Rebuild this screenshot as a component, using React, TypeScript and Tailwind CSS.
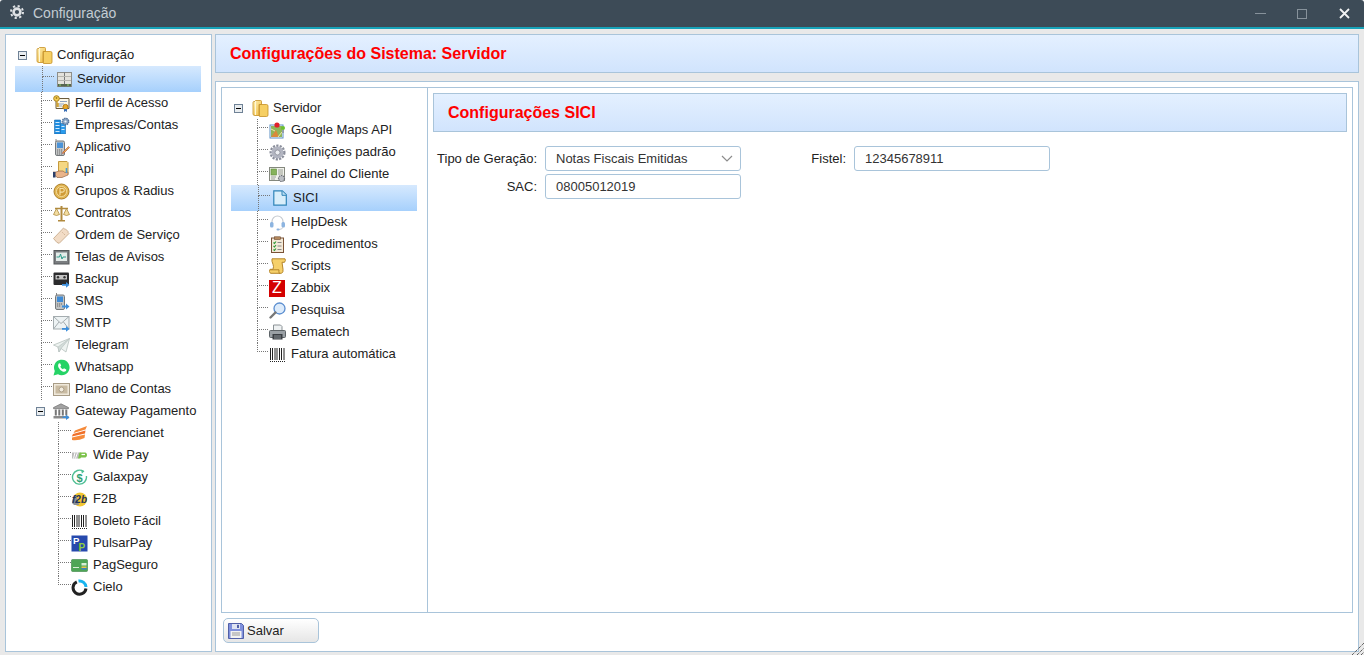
import type { ReactNode } from "react";

const svg = "block w-[17px] h-[17px] shrink-0";

// Inline icons, drawn on a 17×17 grid to match the legacy tree icons
const Icons: Record<string, ReactNode> = {
  folder: (
    <svg className={svg} viewBox="0 0 17 17">
      <defs>
        <linearGradient id="fold" x1="0" y1="0" x2="1" y2="1">
          <stop offset="0" stopColor="#fff2b8" />
          <stop offset="1" stopColor="#efb93c" />
        </linearGradient>
      </defs>
      <path d="M1 2.500 q0-1 1-1 h1.500 v-1 h5 q1 0 1 1 v3 h-2.500 v11 h-4 q-2 0-2-1.500z" fill="url(#fold)" stroke="#c58f25" strokeWidth="0.8" />
      <path d="M7.500 4.500 h7 q1.500 0 1.500 1.500 v9 q0 1.500-1.500 1.500 h-7z" fill="#f6cf63" stroke="#c58f25" strokeWidth="0.8" />
      <path d="M3.500 1 v14" stroke="#fff8d8" strokeWidth="1" />
    </svg>
  ),
  server: (
    <svg className={svg} viewBox="0 0 17 17">
      <rect x="1.500" y="1.500" width="14" height="14" fill="#e3e2dc" stroke="#8d8e8a" />
      <path d="M8.500 1.500 v14" stroke="#77797a" />
      <path d="M2 5.500 h13 M2 9.500 h13" stroke="#b5b5ae" />
      <rect x="2" y="13" width="13" height="2.500" fill="#55664f" />
      <path d="M3 14 h2 M11 14 h2" stroke="#8fd06a" />
    </svg>
  ),
  perfil: (
    <svg className={svg} viewBox="0 0 17 17">
      <path d="M3 3.500 h13 v10 h-13z" fill="#fdf8e8" stroke="#6c5c3e" />
      <path d="M7 6.500 h7 M6 9 h5 M6 11 h3" stroke="#8fa3c0" />
      <circle cx="3.500" cy="3.500" r="2.800" fill="#f5cf55" stroke="#a8801e" />
      <circle cx="3.500" cy="3" r="0.900" fill="#a8801e" />
      <path d="M4 6 v6 M4 9 h2 M4 11 h2" stroke="#c99a2a" strokeWidth="1.300" />
      <circle cx="12.500" cy="12" r="2.600" fill="#e8a92c" stroke="#b37a14" />
      <path d="M11 14 v3 l1.500-1 1.500 1 v-3" fill="#3b6fb6" />
    </svg>
  ),
  empresas: (
    <svg className={svg} viewBox="0 0 17 17">
      <path d="M1.500 3 h6 v14 h-6z" fill="#1f8de0" stroke="#1566ad" strokeWidth="0.600" />
      <path d="M7.500 6.500 h5 v10.500 h-5z" fill="#2a9bec" stroke="#1566ad" strokeWidth="0.600" />
      <path d="M2.500 5.500 h4 M2.500 8.500 h4 M2.500 11.500 h4 M2.500 14.500 h4 M8.500 9.500 h3 M8.500 12.500 h3" stroke="#cfeaff" strokeWidth="1.200" />
      <circle cx="12.500" cy="4.500" r="3.200" fill="#8aa5c4" stroke="#56749c" strokeDasharray="1.500 .7" strokeWidth="1.400" />
      <circle cx="12.500" cy="4.500" r="1.100" fill="#f2f6fb" />
    </svg>
  ),
  aplicativo: (
    <svg className={svg} viewBox="0 0 17 17">
      <path d="M3 0 v3" stroke="#888" />
      <rect x="2.500" y="2" width="9" height="14.500" rx="1.500" fill="#c6c8c9" stroke="#74797c" />
      <rect x="4" y="3.500" width="6" height="5.500" fill="#4b93d8" />
      <path d="M4 11 h6 M4 13 h6 M4 15 h6" stroke="#666" strokeDasharray="1.200 .8" />
      <path d="M10 13 l5.500-5.500 1 1-5.500 5.500-1.500.5z" fill="#e6b34a" stroke="#b3443a" strokeWidth="0.600" />
    </svg>
  ),
  api: (
    <svg className={svg} viewBox="0 0 17 17">
      <path d="M5.500 .5 h8.500 l1 1 v12 h-9.500z" fill="#f5d782" stroke="#c59a3c" />
      <path d="M0 11 h3 l3-1 h4 l2 1.500 3-.5 v3 l-6 2.500 h-5 l-1-1.500 h-3z" fill="#e9b48a" stroke="#8a5a3a" strokeWidth="0.600" />
      <path d="M0 11 h2.500 v5.500 h-2.500z" fill="#2a3f6b" />
      <path d="M13.500 7 v5" stroke="#4c9ad6" strokeWidth="1.600" />
    </svg>
  ),
  grupos: (
    <svg className={svg} viewBox="0 0 17 17">
      <circle cx="8.500" cy="8.500" r="7.500" fill="#e2b654" stroke="#ad8028" />
      <circle cx="8.500" cy="8.500" r="5" fill="#d09b36" stroke="#f3dd9c" />
      <path d="M7 12 V5.500 h2.500 a1.800 1.800 0 0 1 0 3.600 H7" fill="none" stroke="#f6e2a8" strokeWidth="1.100" />
    </svg>
  ),
  contratos: (
    <svg className={svg} viewBox="0 0 17 17">
      <path d="M8.500 1 v14" stroke="#b18a3e" strokeWidth="2" />
      <path d="M5 15.800 h7 M2 3.500 h13" stroke="#b18a3e" strokeWidth="1.500" />
      <path d="M3.500 3.500 l-3 6 q3 2 6 0z M13.500 3.500 l-3 6 q3 2 6 0z" fill="#f2dca0" stroke="#a5802f" strokeWidth="0.700" />
    </svg>
  ),
  ordem: (
    <svg className={svg} viewBox="0 0 17 17">
      <path d="M.5 11.500 L10.500 1 q.8 1.200 2 1 l2.500 2.500 q-.2 1.300 1 2 L6 16.500 q-.6-1-2-1z" fill="#f2dcc6" stroke="#cdb294" />
      <path d="M9.500 5.500 l2.500 2.500" stroke="#c09f7c" strokeDasharray="1 1" />
    </svg>
  ),
  telas: (
    <svg className={svg} viewBox="0 0 17 17">
      <rect x="1" y="1.500" width="15" height="13.500" fill="#7a7d80" stroke="#55585a" />
      <rect x="3" y="3.500" width="11" height="8.500" fill="#e4ebe9" />
      <path d="M3.500 8 h3 l1-3 1.500 5 1-2 h3" fill="none" stroke="#2f9a8a" />
    </svg>
  ),
  backup: (
    <svg className={svg} viewBox="0 0 17 17">
      <rect x="0.500" y="1.500" width="15.500" height="12.500" rx="1" fill="#2b2b2d" />
      <rect x="2.500" y="4" width="11.500" height="4.500" fill="#c4c4c4" />
      <circle cx="5" cy="6.300" r="1.200" fill="#333" />
      <circle cx="11.500" cy="6.300" r="1.200" fill="#333" />
      <path d="M9 13 h4 v-2 l3.500 3-3.500 2.800 v-2 h-4z" fill="#3d8fdc" />
    </svg>
  ),
  sms: (
    <svg className={svg} viewBox="0 0 17 17">
      <path d="M3.500 0 v3" stroke="#888" />
      <rect x="2.500" y="2" width="9" height="14.500" rx="1.500" fill="#c0c3c4" stroke="#74797c" />
      <rect x="4" y="3.500" width="6" height="5.500" fill="#3f8bd6" />
      <path d="M4 11 h5 M4 13 h4" stroke="#666" strokeDasharray="1.200 .8" />
      <path d="M9 12.500 h4 v-2 l3.500 3-3.500 3 v-2 h-4z" fill="#3d8fdc" />
    </svg>
  ),
  smtp: (
    <svg className={svg} viewBox="0 0 17 17">
      <rect x="0.500" y="1.500" width="15.500" height="12.500" fill="#eef3f4" stroke="#a5adb0" />
      <path d="M.5 1.500 L8 8.500 16 1.500 M.5 14 L6 7 M16 14 L10.500 7" fill="none" stroke="#a5adb0" />
      <path d="M9 13 h4 v-2 l3.500 3-3.500 2.800 v-2 h-4z" fill="#3d8fdc" />
    </svg>
  ),
  telegram: (
    <svg className={svg} viewBox="0 0 17 17">
      <path d="M.5 8 L16.500 1.500 13 15 8 11.500 6 15 5 10z" fill="#eef3f1" stroke="#b5c0bd" strokeWidth="0.800" />
      <path d="M5 10 L16.500 1.500 8 11.500 6 15z" fill="#d3dcd9" stroke="#b5c0bd" strokeWidth="0.600" />
    </svg>
  ),
  whatsapp: (
    <svg className={svg} viewBox="0 0 17 17">
      <path d="M.5 16.500 l1.300-4.500 A7.800 7.800 0 1 1 5 15.300z" fill="#25d366" />
      <path d="M5.800 4.400 l1.300-.2 1.100 2.400-.9 1.100 a5.200 5.200 0 0 0 2.600 2.600 l1.100-1 2.300 1.100-.2 1.300 c-.7 1.100-2.200 1.300-3.500.8 a8 8 0 0 1-4.200-4.200 c-.5-1.300-.3-3 .4-3.900z" fill="#fff" />
    </svg>
  ),
  plano: (
    <svg className={svg} viewBox="0 0 17 17">
      <rect x="0.500" y="2.500" width="16" height="12" fill="#efe8da" stroke="#a89c86" />
      <rect x="2.500" y="4.500" width="12" height="8" fill="#c9bba2" />
      <circle cx="8.500" cy="8.500" r="2.400" fill="#f2ecdf" stroke="#8f8068" strokeWidth="0.600" />
    </svg>
  ),
  gateway: (
    <svg className={svg} viewBox="0 0 17 17">
      <path d="M8 .8 L15.500 4.500 v1.200 h-15 v-1.200z" fill="#a2a2a2" stroke="#666" strokeWidth="0.600" />
      <path d="M2.800 6.500 v6 M6.300 6.500 v6 M9.800 6.500 v6 M13.300 6.500 v6" stroke="#777" strokeWidth="2" />
      <path d="M.5 13 h15 v2.500 h-15z" fill="#8a8a8a" />
      <path d="M9.500 13.500 h3.500 v-2 l3.500 3-3.500 2.500 v-2 h-3.500z" fill="#3d8fdc" />
    </svg>
  ),
  gerencianet: (
    <svg className={svg} viewBox="0 0 17 17">
      <path d="M16 1 L4 5.500 2.500 8 14.500 4.500z" fill="#f58a3a" />
      <path d="M14.500 5.500 L2 9 .8 11.500 14 8.500z" fill="#f0702a" />
      <path d="M14 9.500 L1 12.500 1 15 q6 1 12.500-2z" fill="#f58a3a" />
    </svg>
  ),
  widepay: (
    <svg className={svg} viewBox="0 0 17 17">
      <path d="M1 5.500 h9 l-2.500 6 h-6.500z" fill="#bdbdbd" />
      <path d="M4 5.500 l-1.500 6 M6.500 5.500 l-2 6" stroke="#fff" />
      <path d="M8.500 5.500 h6 a2.800 2.800 0 0 1 0 5 h-4.500 l-.8 1 h-2.200z" fill="#7cc24a" />
      <path d="M10.500 7.500 h3.500" stroke="#fff" strokeWidth="1.200" />
    </svg>
  ),
  galaxpay: (
    <svg className={svg} viewBox="0 0 17 17">
      <path d="M12.500 2.400 A7 7 0 1 0 15.400 7" fill="none" stroke="#4fbf93" strokeWidth="1.400" />
      <path d="M10 .8 l3.500 1.400-2.600 2.400z" fill="#4fbf93" />
      <text x="8.500" y="12.500" textAnchor="middle" fontFamily="'Liberation Sans', sans-serif" fontSize="11" fontWeight="700" fill="#2f9f73">$</text>
    </svg>
  ),
  f2b: (
    <svg className={svg} viewBox="0 0 17 17">
      <circle cx="9" cy="8.500" r="7" fill="#f2c631" />
      <path d="M1 12 q0-5 4-8 l3 10 h-5z" fill="#8a8f96" />
      <text x="8.500" y="12" textAnchor="middle" fontFamily="'Liberation Sans', sans-serif" fontSize="10" fontStyle="italic" fontWeight="700" fill="#23345c">f2b</text>
    </svg>
  ),
  barcode: (
    <svg className={svg} viewBox="0 0 17 17">
      <path d="M1.500 2 v12 M3.500 2 v12 M6 2 v12 M8 2 v12 M10.500 2 v12 M12.500 2 v12 M15 2 v12" stroke="#222" strokeWidth="1" />
      <path d="M1 15.500 h15" stroke="#222" strokeDasharray="1 1" />
    </svg>
  ),
  pulsar: (
    <svg className={svg} viewBox="0 0 17 17">
      <rect x="0.500" y="0.500" width="16" height="16" fill="#2649ad" />
      <text x="2" y="9" fontFamily="'Liberation Sans', sans-serif" fontSize="9.500" fontWeight="700" fill="#fff">P</text>
      <text x="7.500" y="15.500" fontFamily="'Liberation Sans', sans-serif" fontSize="10" fontWeight="700" fill="#8fd03e">P</text>
    </svg>
  ),
  pagseguro: (
    <svg className={svg} viewBox="0 0 17 17">
      <rect x="0.500" y="2.500" width="16" height="12" rx="1" fill="#4ea556" stroke="#3b8543" strokeWidth="0.600" />
      <path d="M2 10.500 h6" stroke="#d8eed6" />
      <rect x="10.500" y="6" width="5" height="2.500" fill="#d8eed6" />
      <rect x="10.500" y="9.500" width="5" height="1.500" fill="#e8c64a" />
      <rect x="10.500" y="11" width="5" height="1.500" fill="#3e7fc5" />
    </svg>
  ),
  cielo: (
    <svg className={svg} viewBox="0 0 17 17">
      <path d="M7.500 2 A6.500 6.500 0 0 1 15 8" fill="none" stroke="#19b4ee" strokeWidth="3" />
      <path d="M15 9.500 A6.500 6.500 0 1 1 5.800 2.800" fill="none" stroke="#222" strokeWidth="3" />
    </svg>
  ),
  maps: (
    <svg className={svg} viewBox="0 0 17 17">
      <rect x="1" y="3" width="13" height="13" fill="#fff" stroke="#5d8fc4" />
      <path d="M2 4 h11 v11 h-11z" fill="#8fb65a" />
      <path d="M2 15 l5-7 3 7z" fill="#d98a3a" />
      <path d="M2 7 l4 2 M9 15 l4-5" stroke="#f3e6a8" />
      <circle cx="8" cy="3" r="2.600" fill="#e0202a" />
      <circle cx="14" cy="6" r="2" fill="#6cc02e" />
      <path d="M14 8 v3" stroke="#777" />
    </svg>
  ),
  gear: (
    <svg className={svg} viewBox="0 0 17 17">
      <circle cx="8.500" cy="8.500" r="6.800" fill="none" stroke="#8a8e9b" strokeWidth="2.400" strokeDasharray="2.200 1.200" />
      <circle cx="8.500" cy="8.500" r="6" fill="#b2b5c1" />
      <circle cx="8.500" cy="8.500" r="2.500" fill="#eceef2" stroke="#82858f" strokeWidth="0.700" />
    </svg>
  ),
  painel: (
    <svg className={svg} viewBox="0 0 17 17">
      <rect x="0.500" y="1.500" width="15" height="13" fill="#f1f2ec" stroke="#84887e" />
      <rect x="2" y="3" width="5.500" height="6" fill="#86b35a" stroke="#5e8a3a" strokeWidth="0.600" />
      <path d="M9 4 h5 M9 6 h5 M9 8 h5 M2 11 h5 M2 13 h4" stroke="#9a9e94" />
      <circle cx="12.500" cy="12.500" r="3" fill="#bcbfc4" stroke="#6e7178" strokeWidth="1.200" strokeDasharray="1.500 .7" />
    </svg>
  ),
  sici: (
    <svg className="block w-[14px] h-[16px] shrink-0" viewBox="0 0 14 16">
      <path d="M.800 .800 h8.500 l4 4 v10.400 h-12.500z" fill="#d9eefa" stroke="#2f84b8" strokeWidth="1.200" />
      <path d="M9 1 v4.300 h4.300" fill="#bfe0f3" stroke="#2f84b8" />
    </svg>
  ),
  helpdesk: (
    <svg className={svg} viewBox="0 0 17 17">
      <path d="M3 9 V7.500 a5.500 5.500 0 0 1 11 0 V9" fill="none" stroke="#c5cad0" strokeWidth="1.200" />
      <rect x="1" y="8" width="3.500" height="5.500" rx="1.500" fill="#8cb4e0" />
      <rect x="12.500" y="8" width="3.500" height="5.500" rx="1.500" fill="#8cb4e0" />
      <path d="M14 13 q-.500 2.500-4 2.500" fill="none" stroke="#c5cad0" />
      <rect x="7.500" y="14.500" width="3" height="2" rx="1" fill="#8cb4e0" />
    </svg>
  ),
  procedimentos: (
    <svg className={svg} viewBox="0 0 17 17">
      <rect x="2.500" y="2" width="12" height="14.500" fill="#f3e9d8" stroke="#7a5236" />
      <rect x="5.500" y="0.800" width="6" height="2.700" fill="#b58a5f" stroke="#6e4a30" strokeWidth="0.600" />
      <path d="M4.500 6.500 l1 1 1.500-2 M4.500 10 l1 1 1.500-2 M4.500 13.500 l1 1 1.500-2" fill="none" stroke="#2f9a35" strokeWidth="1.100" />
      <path d="M8.500 6.500 h4 M8.500 10 h4 M8.500 13.500 h4" stroke="#888" />
    </svg>
  ),
  scripts: (
    <svg className={svg} viewBox="0 0 17 17">
      <path d="M3 .8 h13 q1 1.500-.5 3.500 h-2.500 l1 7 q.5 3-1.500 4 h-11 q-2-1.500-.5-4 h3 q1-3 0-5 q-1.500-3-1-5.500z" fill="#f6d06a" stroke="#b5852a" />
      <path d="M1.500 11.800 h8.500 q-.5 2 .5 4" fill="none" stroke="#b5852a" />
    </svg>
  ),
  zabbix: (
    <div className="w-[16px] h-[17px] bg-[#d40000] shrink-0 flex items-center justify-center text-white text-[16px] leading-none">Z</div>
  ),
  pesquisa: (
    <svg className={svg} viewBox="0 0 17 17">
      <circle cx="10.500" cy="6.500" r="5.500" fill="#dcebfb" stroke="#5b8ed0" strokeWidth="1.300" />
      <path d="M6.500 10.500 L1.500 15.500" stroke="#777" strokeWidth="2.400" strokeLinecap="round" />
    </svg>
  ),
  bematech: (
    <svg className={svg} viewBox="0 0 17 17">
      <path d="M4.500 1 h7 l1.500 1.500 v4.500 h-8.500z" fill="#eef1f2" stroke="#8a9195" />
      <rect x="0.500" y="6.500" width="16" height="7" rx="1" fill="#9aa0a5" stroke="#5d6367" />
      <rect x="3.500" y="10" width="10" height="5.500" fill="#3a3f44" />
      <path d="M5 12 h7 M5 14 h7" stroke="#8a9195" />
    </svg>
  ),
};

interface Item {
  icon: string;
  label: string;
  selected?: boolean;
}

// Dotted elbow that joins a row to its parent
function Guide({ last, className, top }: { last?: boolean; className: string; top: string }) {
  return (
    <span className={`flex flex-col self-stretch shrink-0 ${className}`}>
      <span className={`border-l border-b border-dotted border-[#777] ${top}`} />
      <span className={`flex-1 border-l border-dotted ${last ? "border-transparent" : "border-[#777]"}`} />
    </span>
  );
}

function Minus() {
  return (
    <span className="w-[9px] h-[9px] shrink-0 border border-[#6f8296] bg-[#e9edf0] flex items-center justify-center">
      <span className="w-[5px] h-px bg-black" />
    </span>
  );
}

function Row({ item, last }: { item: Item; last?: boolean }) {
  if (item.selected) {
    return (
      <div className="flex items-center h-[26px] pl-[27px] bg-gradient-to-b from-[#d6e9fe] to-[#a6d0fc] text-[#1a1a1a]">
        <Guide className="w-[12px]" top="h-[11px]" />
        <span className="w-[18px] flex justify-center shrink-0 pl-[2px]">{Icons[item.icon]}</span>
        <span className="ml-[5px]">{item.label}</span>
      </div>
    );
  }
  return (
    <div className="flex items-center h-[22px] pl-[26px]">
      <Guide className="w-[11px]" top="h-[9px]" last={last} />
      <span className="w-[18px] shrink-0 pl-px">{Icons[item.icon]}</span>
      <span className="ml-[5px]">{item.label}</span>
    </div>
  );
}

function ParentRow({ icon, label, className, slot }: { icon: string; label: string; className: string; slot: string }) {
  return (
    <div className={`flex items-center h-[22px] ${className}`}>
      <Minus />
      <span className={`shrink-0 ${slot}`}>{Icons[icon]}</span>
      <span>{label}</span>
    </div>
  );
}

const MAIN_TREE: Item[] = [
  { icon: "server", label: "Servidor", selected: true },
  { icon: "perfil", label: "Perfil de Acesso" },
  { icon: "empresas", label: "Empresas/Contas" },
  { icon: "aplicativo", label: "Aplicativo" },
  { icon: "api", label: "Api" },
  { icon: "grupos", label: "Grupos & Radius" },
  { icon: "contratos", label: "Contratos" },
  { icon: "ordem", label: "Ordem de Serviço" },
  { icon: "telas", label: "Telas de Avisos" },
  { icon: "backup", label: "Backup" },
  { icon: "sms", label: "SMS" },
  { icon: "smtp", label: "SMTP" },
  { icon: "telegram", label: "Telegram" },
  { icon: "whatsapp", label: "Whatsapp" },
  { icon: "plano", label: "Plano de Contas" },
];

const GATEWAYS: Item[] = [
  { icon: "gerencianet", label: "Gerencianet" },
  { icon: "widepay", label: "Wide Pay" },
  { icon: "galaxpay", label: "Galaxpay" },
  { icon: "f2b", label: "F2B" },
  { icon: "barcode", label: "Boleto Fácil" },
  { icon: "pulsar", label: "PulsarPay" },
  { icon: "pagseguro", label: "PagSeguro" },
  { icon: "cielo", label: "Cielo" },
];

const SERVER_TREE: Item[] = [
  { icon: "maps", label: "Google Maps API" },
  { icon: "gear", label: "Definições padrão" },
  { icon: "painel", label: "Painel do Cliente" },
  { icon: "sici", label: "SICI", selected: true },
  { icon: "helpdesk", label: "HelpDesk" },
  { icon: "procedimentos", label: "Procedimentos" },
  { icon: "scripts", label: "Scripts" },
  { icon: "zabbix", label: "Zabbix" },
  { icon: "pesquisa", label: "Pesquisa" },
  { icon: "bematech", label: "Bematech" },
  { icon: "barcode", label: "Fatura automática" },
];

const banner =
  "h-[39px] shrink-0 flex items-center border border-[#a9c4da] bg-gradient-to-b from-[#e4f0ff] to-[#d1e4fd] text-[16px] font-bold text-[#ff0000]";
const field =
  "h-[25px] flex items-center pl-[10px] border border-[#a9c4da] rounded-[3px] bg-white text-[#333]";

export default function App() {
  return (
    <div className="w-screen h-screen flex flex-col bg-white overflow-hidden text-[13px] text-[#222] font-['Liberation_Sans',Arial,sans-serif]">
      {/* Title bar */}
      <header className="h-[29px] shrink-0 flex items-center rounded-t-[3px] bg-[#3d4b57] border-b-2 border-[#17a2b8] text-[14px] text-[#c3ccd3] pl-[10px]">
        <svg className="w-[14px] h-[14px] -mt-[4px]" viewBox="0 0 14 14">
          <circle cx="7" cy="7" r="6" fill="none" stroke="#dfe2e5" strokeWidth="2" strokeDasharray="2.200 2.500" />
          <circle cx="7" cy="7" r="3.400" fill="none" stroke="#dfe2e5" strokeWidth="2.600" />
        </svg>
        <span className="ml-[9px] -mt-[1px]">Configuração</span>
        <div className="ml-auto flex items-center">
          <span className="w-[11px] h-px bg-[#87929b]" />
          <span className="w-[10px] h-[10px] ml-[31px] border border-[#87929b]" />
          <svg className="w-[11px] h-[11px] ml-[32px] mr-[14px]" viewBox="0 0 11 11">
            <path d="M1 1 L10 10 M10 1 L1 10" stroke="#f2f3f4" strokeWidth="1.800" />
          </svg>
        </div>
      </header>

      {/* Body */}
      <main className="relative flex-1 min-h-0 flex gap-[3px] bg-[#e9e9e9] pt-[5px] pl-[5px] pr-[5px] pb-[3px]">
        <aside className="w-[207px] shrink-0 bg-white border border-[#a9c4da] pt-[9px] pl-[9px] pr-[9px]">
          <div className="w-[186px]">
            <ParentRow icon="folder" label="Configuração" className="pl-[3px]" slot="ml-[9px] w-[21px]" />
            {MAIN_TREE.map((item) => (
              <Row key={item.label} item={item} />
            ))}
            <ParentRow icon="gateway" label="Gateway Pagamento" className="pl-[21px]" slot="ml-[8px] w-[22px]" />
            {GATEWAYS.map((item, i) => (
              <div key={item.label} className="flex items-center h-[22px] pl-[43px]">
                <Guide className="w-[13px]" top="h-[9px]" last={i === GATEWAYS.length - 1} />
                <span className="w-[18px] shrink-0">{Icons[item.icon]}</span>
                <span className="ml-[4px]">{item.label}</span>
              </div>
            ))}
          </div>
        </aside>

        <section className="flex-1 min-w-0 flex flex-col">
          <div className={`${banner} pl-[14px]`}>Configurações do Sistema: Servidor</div>

          <div className="flex-1 min-h-0 mt-[8px] bg-white border border-[#a9c4da] px-[5px] pt-[5px] flex flex-col">
            <div className="flex-1 min-h-0 flex border border-[#a9c4da]">
              <div className="w-[206px] shrink-0 border-r border-[#a9c4da] pt-[9px] pl-[9px] pr-[10px]">
                <ParentRow icon="folder" label="Servidor" className="pl-[3px]" slot="ml-[9px] w-[21px]" />
                {SERVER_TREE.map((item, i) => (
                  <Row key={item.label} item={item} last={i === SERVER_TREE.length - 1} />
                ))}
              </div>

              <div className="flex-1 min-w-0 pt-[5px] px-[5px]">
                <div className={`${banner} pl-[14px]`}>Configurações SICI</div>
                <div className="mt-[14px] grid grid-cols-[104px_196px_97px_196px] gap-x-[8px] gap-y-[3px] items-center">
                  <label className="text-right whitespace-nowrap">Tipo de Geração:</label>
                  <div className={`${field} justify-between pr-[7px]`}>
                    <span>Notas Fiscais Emitidas</span>
                    <svg className="w-[12px] h-[7px]" viewBox="0 0 12 7">
                      <path d="M1 1 L6 6 11 1" fill="none" stroke="#8c8c8c" strokeWidth="1.200" />
                    </svg>
                  </div>
                  <label className="text-right">Fistel:</label>
                  <div className={field}>12345678911</div>
                  <label className="text-right">SAC:</label>
                  <div className={field}>08005012019</div>
                </div>
              </div>
            </div>

            <div className="h-[38px] shrink-0 pt-[5px] pl-[2px]">
              <button className="w-[96px] h-[25px] flex items-center pl-[5px] pt-px border border-[#a9c4da] rounded-[5px] bg-gradient-to-b from-white to-[#e6e6e6]">
                <svg className="w-[16px] h-[16px] shrink-0 -ml-px" viewBox="0 0 16 16">
                  <path d="M.500 .500 h13 l2 2 v13 h-15z" fill="#7f90dd" stroke="#5160a8" />
                  <rect x="4" y="1" width="8" height="5" fill="#dfe4f2" />
                  <rect x="9" y="1.800" width="2" height="3.200" fill="#5160a8" />
                  <rect x="2.500" y="8" width="11" height="7" fill="#f2f2f2" />
                  <path d="M4 10 h8 M4 12 h8" stroke="#9a9a9a" />
                </svg>
                <span className="ml-[3px]">Salvar</span>
              </button>
            </div>
          </div>
        </section>

        {/* Resize grip */}
        <svg className="absolute right-0 bottom-0 w-[12px] h-[12px]" viewBox="0 0 12 12">
          <path d="M0 12 L12 0 M5 12 L12 5 M9 12 L12 9" stroke="#222" strokeDasharray="1 1" />
        </svg>
      </main>
    </div>
  );
}
